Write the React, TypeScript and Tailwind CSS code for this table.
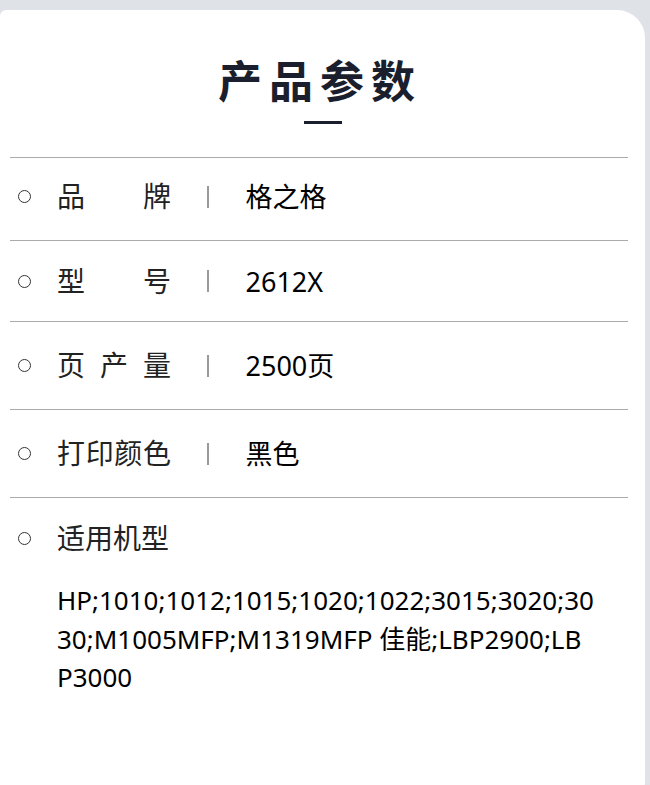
const font = { fontFamily: '"Noto Sans", "Noto Sans CJK SC", sans-serif' }

const rows = [
  { label: '品牌', value: '格之格', h: 'h-[83px] pb-[5px]' },
  { label: '型号', value: '2612X', h: 'h-[81px]' },
  { label: '页产量', value: '2500页', h: 'h-[88px]' },
  { label: '打印颜色', value: '黑色', h: 'h-[88px]' },
]

function Dot() {
  return <span className="block w-[13px] h-[13px] shrink-0 rounded-full border-[1.5px] border-[#333]" />
}

export default function App() {
  return (
    <div className="min-h-screen overflow-hidden bg-[#dfe3e8] pt-[10px] pr-[5px]" style={font}>
      <div className="h-[800px] rounded-tl-[6px] rounded-tr-[28px] rounded-br-[28px] bg-white pt-[46px]">
        <div className="flex flex-col items-center">
          <h1
            className="text-[44px] leading-[46px] font-semibold tracking-[7px] pr-[5px] text-[#1b1e2c]"
            style={{ fontFamily: '"Noto Sans CJK SC", sans-serif' }}
          >
            产品参数
          </h1>
          <div className="mt-[19px] h-[3px] w-[38px] bg-[#1b1e2c]" />
        </div>

        <div className="mt-[33px] ml-[10px] w-[618px]">
          {rows.map(r => (
            <div key={r.label} className={`${r.h} flex items-center border-t border-[#ababab] pl-[8px]`}>
              <Dot />
              <span className="ml-[26px] block w-[114px] shrink-0 text-[28px] leading-[35px] text-[#222] [text-align-last:justify]">
                {r.label}
              </span>
              <span className="ml-[36px] block h-[22px] w-[1.5px] bg-[#9a9a9a]" />
              <span className="ml-[37px] text-[27px] leading-[35px] text-black">{r.value}</span>
            </div>
          ))}
          <div className="border-t border-[#ababab] pl-[8px] pt-[23px]">
            <div className="flex items-center">
              <Dot />
              <span className="ml-[26px] text-[28px] leading-[35px] text-[#222]">适用机型</span>
            </div>
            <p className="mt-[25px] ml-[39px] w-[538px] break-all text-[26px] leading-[38.5px] text-black">
              HP;1010;1012;1015;1020;1022;3015;3020;3030;M1005MFP;M1319MFP 佳能;LBP2900;LBP3000
            </p>
          </div>
        </div>
      </div>
    </div>
  )
}
